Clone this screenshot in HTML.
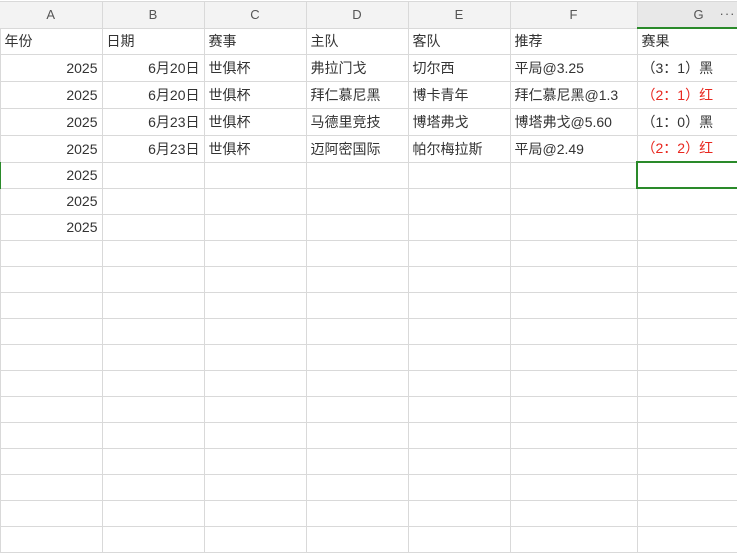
<!DOCTYPE html>
<html><head><meta charset="utf-8"><style>
body{margin:0;width:737px;height:549px;overflow:hidden;background:#fff;font-family:"Liberation Sans","Noto Sans CJK SC",sans-serif;font-size:14px;color:#333}
table{position:absolute;left:-1px;top:1px;border-collapse:collapse;table-layout:fixed;width:760px}
td{border:1px solid #d9d9d9;padding:0 4px;white-space:nowrap;overflow:hidden;line-height:14px}
tr.h td{background:#f3f3f3;text-align:center;color:#555;height:25px;font-size:13px}
tr.h td.g{background:#e8e8e8;border-bottom:2px solid #2a8a2a}
.r{text-align:right}
.red{color:#e8271f}
</style></head><body>
<table>
<colgroup><col style="width:102px"><col style="width:102px"><col style="width:102px"><col style="width:102px"><col style="width:102px"><col style="width:127px"><col style="width:123px"></colgroup>
<tr class="h"><td style="border-left:none">A</td><td>B</td><td>C</td><td>D</td><td>E</td><td>F</td><td class="g" style="position:relative">G<span style="position:absolute;left:82px;top:5px;letter-spacing:1px">···</span></td></tr>
<tr style="height:26px"><td>年份</td><td>日期</td><td>赛事</td><td>主队</td><td>客队</td><td>推荐</td><td>赛果</td></tr>
<tr style="height:27px"><td class="r">2025</td><td class="r">6月20日</td><td>世俱杯</td><td>弗拉门戈</td><td>切尔西</td><td>平局@3.25</td><td>（3：1）黑</td></tr>
<tr style="height:27px"><td class="r">2025</td><td class="r">6月20日</td><td>世俱杯</td><td>拜仁慕尼黑</td><td>博卡青年</td><td>拜仁慕尼黑@1.3</td><td class="red">（2：1）红</td></tr>
<tr style="height:27px"><td class="r">2025</td><td class="r">6月23日</td><td>世俱杯</td><td>马德里竞技</td><td>博塔弗戈</td><td>博塔弗戈@5.60</td><td>（1：0）黑</td></tr>
<tr style="height:27px"><td class="r">2025</td><td class="r">6月23日</td><td>世俱杯</td><td>迈阿密国际</td><td>帕尔梅拉斯</td><td>平局@2.49</td><td class="red">（2：2）红</td></tr>
<tr style="height:26px"><td class="r" style="border-left:2px solid #2a8a2a">2025</td><td></td><td></td><td></td><td></td><td></td><td style="border:2px solid #2a8a2a"></td></tr>
<tr style="height:26px"><td class="r">2025</td><td></td><td></td><td></td><td></td><td></td><td></td></tr>
<tr style="height:26px"><td class="r">2025</td><td></td><td></td><td></td><td></td><td></td><td></td></tr>
<tr style="height:26px"><td></td><td></td><td></td><td></td><td></td><td></td><td></td></tr>
<tr style="height:26px"><td></td><td></td><td></td><td></td><td></td><td></td><td></td></tr>
<tr style="height:26px"><td></td><td></td><td></td><td></td><td></td><td></td><td></td></tr>
<tr style="height:26px"><td></td><td></td><td></td><td></td><td></td><td></td><td></td></tr>
<tr style="height:26px"><td></td><td></td><td></td><td></td><td></td><td></td><td></td></tr>
<tr style="height:26px"><td></td><td></td><td></td><td></td><td></td><td></td><td></td></tr>
<tr style="height:26px"><td></td><td></td><td></td><td></td><td></td><td></td><td></td></tr>
<tr style="height:26px"><td></td><td></td><td></td><td></td><td></td><td></td><td></td></tr>
<tr style="height:26px"><td></td><td></td><td></td><td></td><td></td><td></td><td></td></tr>
<tr style="height:26px"><td></td><td></td><td></td><td></td><td></td><td></td><td></td></tr>
<tr style="height:26px"><td></td><td></td><td></td><td></td><td></td><td></td><td></td></tr>
<tr style="height:26px"><td></td><td></td><td></td><td></td><td></td><td></td><td></td></tr>
</table>
</body></html>
